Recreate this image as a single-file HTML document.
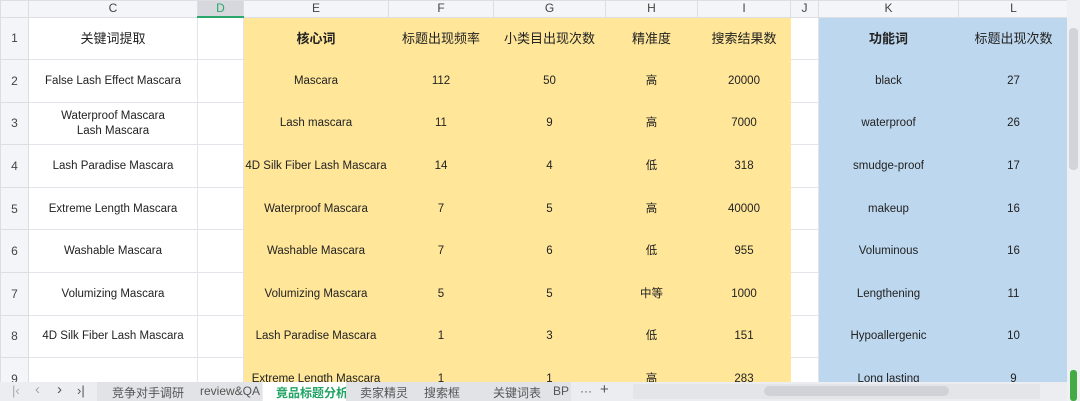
<!DOCTYPE html>
<html><head><meta charset="utf-8"><style>
*{margin:0;padding:0;box-sizing:border-box}
body{width:1080px;height:401px;overflow:hidden;background:#fff;font-family:"Liberation Sans","Noto Sans CJK SC",sans-serif;font-size:11.5px;color:#222;position:relative}
table{border-collapse:collapse;table-layout:fixed;position:absolute;left:0;top:0;width:1068px}
td{text-align:center;vertical-align:middle;border:1px solid #e2e4ea;overflow:hidden;white-space:nowrap;line-height:15px;padding:0;padding-top:1px}
tr.h td{height:16px;background:#f4f5f8;color:#444;font-size:12px;border-color:#dcdee4;padding-top:0}
td.rn{background:#f4f5f8;color:#444;border-color:#dcdee4;font-size:12px}
td.y{background:#ffe699;border-color:#ffe699}
td.b{background:#bdd7ee;border-color:#bdd7ee}
tr.r td{height:42.6px}
.bd{font-weight:bold}
.c13{font-size:13px}
#tabs{position:absolute;left:0;top:382px;width:1067px;height:19px;background:#ecedf0;font-size:12px;color:#555}
#tabs span{position:absolute;top:2px}
#vs{position:absolute;left:1067px;top:0;width:13px;height:401px;background:#eef0f3}
</style></head><body>
<table>
<colgroup><col style="width:28px"><col style="width:169px"><col style="width:46px"><col style="width:145px"><col style="width:105px"><col style="width:112px"><col style="width:92px"><col style="width:93px"><col style="width:28px"><col style="width:140px"><col style="width:110px"></colgroup>
<tr class="h"><td style="background:#f4f5f8"></td><td>C</td><td style="background:#d6d8de;color:#2aa86b;border-bottom:2px solid #2aa86b">D</td><td>E</td><td>F</td><td>G</td><td>H</td><td>I</td><td>J</td><td>K</td><td>L</td></tr>
<tr class="r"><td class="rn">1</td><td class="c13">关键词提取</td><td></td><td class="y bd c13">核心词</td><td class="y c13">标题出现频率</td><td class="y c13">小类目出现次数</td><td class="y c13">精准度</td><td class="y c13">搜索结果数</td><td></td><td class="b bd c13">功能词</td><td class="b c13">标题出现次数</td></tr>
<tr class="r"><td class="rn">2</td><td>False Lash Effect Mascara</td><td></td><td class="y">Mascara</td><td class="y">112</td><td class="y">50</td><td class="y">高</td><td class="y">20000</td><td></td><td class="b">black</td><td class="b">27</td></tr>
<tr class="r"><td class="rn">3</td><td>Waterproof Mascara<br>Lash Mascara</td><td></td><td class="y">Lash mascara</td><td class="y">11</td><td class="y">9</td><td class="y">高</td><td class="y">7000</td><td></td><td class="b">waterproof</td><td class="b">26</td></tr>
<tr class="r"><td class="rn">4</td><td>Lash Paradise Mascara</td><td></td><td class="y">4D Silk Fiber Lash Mascara</td><td class="y">14</td><td class="y">4</td><td class="y">低</td><td class="y">318</td><td></td><td class="b">smudge-proof</td><td class="b">17</td></tr>
<tr class="r"><td class="rn">5</td><td>Extreme Length Mascara</td><td></td><td class="y">Waterproof Mascara</td><td class="y">7</td><td class="y">5</td><td class="y">高</td><td class="y">40000</td><td></td><td class="b">makeup</td><td class="b">16</td></tr>
<tr class="r"><td class="rn">6</td><td>Washable Mascara</td><td></td><td class="y">Washable Mascara</td><td class="y">7</td><td class="y">6</td><td class="y">低</td><td class="y">955</td><td></td><td class="b">Voluminous</td><td class="b">16</td></tr>
<tr class="r"><td class="rn">7</td><td>Volumizing Mascara</td><td></td><td class="y">Volumizing Mascara</td><td class="y">5</td><td class="y">5</td><td class="y">中等</td><td class="y">1000</td><td></td><td class="b">Lengthening</td><td class="b">11</td></tr>
<tr class="r"><td class="rn">8</td><td>4D Silk Fiber Lash Mascara</td><td></td><td class="y">Lash Paradise Mascara</td><td class="y">1</td><td class="y">3</td><td class="y">低</td><td class="y">151</td><td></td><td class="b">Hypoallergenic</td><td class="b">10</td></tr>
<tr class="r"><td class="rn">9</td><td></td><td></td><td class="y">Extreme Length Mascara</td><td class="y">1</td><td class="y">1</td><td class="y">高</td><td class="y">283</td><td></td><td class="b">Long lasting</td><td class="b">9</td></tr>
</table>
<div id="tabs">
<span style="left:12px;color:#aaa;font-size:13px;top:1px">|&lsaquo;</span>
<span style="left:35px;color:#aaa;font-size:15px;top:-1px">&lsaquo;</span>
<span style="left:57px;font-size:15px;top:-1px">&rsaquo;</span>
<span style="left:77px;font-size:13px;top:1px">&rsaquo;|</span>
<div style="position:absolute;left:97px;top:0;width:165px;height:19px;background:#e2e3e7"></div>
<span style="left:112px">竞争对手调研</span>
<span style="left:200px">review&amp;QA</span>
<div style="position:absolute;left:263px;top:0;width:83px;height:19px;background:#fff"></div>
<span style="left:276px;color:#1fa463;font-weight:bold">竟品标题分析</span>
<div style="position:absolute;left:346px;top:0;width:225px;height:19px;background:#e2e3e7"></div>
<span style="left:360px">卖家精灵</span>
<span style="left:424px">搜索框</span>
<span style="left:493px">关键词表</span>
<span style="left:553px">BP</span>
<span style="left:580px">···</span>
<span style="left:600px;font-size:15px;top:-1px">+</span>
<div style="position:absolute;left:633px;top:2px;width:407px;height:15px;background:#e4e5e9;border-radius:2px"></div>
<div style="position:absolute;left:764px;top:4px;width:185px;height:10px;background:#d0d2d8;border-radius:5px"></div>
</div>
<div id="vs">
<div style="position:absolute;left:2px;top:28px;width:9px;height:142px;background:#d2d4d9;border-radius:4px"></div>
<div style="position:absolute;left:3px;top:370px;width:7px;height:31px;background:#4a4;border-radius:3px"></div>
</div>
</body></html>
